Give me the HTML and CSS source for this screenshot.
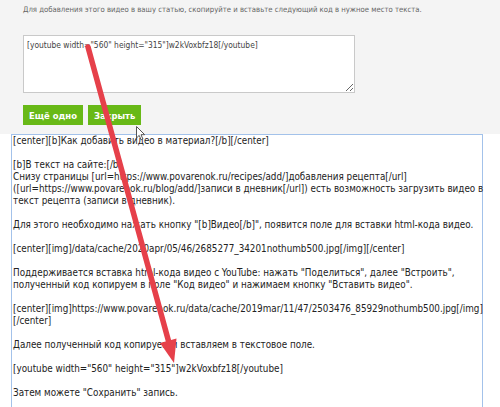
FILE: index.html
```html
<!DOCTYPE html>
<html lang="ru">
<head>
<meta charset="utf-8">
<title>Видео</title>
<link rel="stylesheet" href="styles.css">
</head>
<body>
<div class="page">
  <div class="panel">
    <p class="hint">Для добавления этого видео в вашу статью, скопируйте и вставьте следующий код в нужное место текста.</p>
    <textarea class="code">[youtube width="560" height="315"]w2kVoxbfz18[/youtube]</textarea>
    <div class="actions">
      <button class="btn">Ещё одно</button>
      <button class="btn">Закрыть</button>
    </div>
  </div>
  <div class="editor">[center][b]Как добавить видео в материал?[/b][/center]

[b]В текст на сайте:[/b]
Снизу страницы [url=https://www.povarenok.ru/recipes/add/]добавления рецепта[/url]
([url=https://www.povarenok.ru/blog/add/]записи в дневник[/url]) есть возможность загрузить видео в
текст рецепта (записи в дневник).

Для этого необходимо нажать кнопку "[b]Видео[/b]", появится поле для вставки html-кода видео.

[center][img]/data/cache/2020apr/05/46/2685277_34201nothumb500.jpg[/img][/center]

Поддерживается вставка html-кода видео с YouTube: нажать "Поделиться", далее "Встроить",
полученный код копируем в поле "Код видео" и нажимаем кнопку "Вставить видео".

[center][img]https://www.povarenok.ru/data/cache/2019mar/11/47/2503476_85929nothumb500.jpg[/img]
[/center]

Далее полученный код копируем и вставляем в текстовое поле.

[youtube width="560" height="315"]w2kVoxbfz18[/youtube]

Затем можете "Сохранить" запись.</div>
  <svg class="arrow" width="500" height="407" viewBox="0 0 500 407">
    <line x1="88" y1="47" x2="168.5" y2="341" stroke="#e6404a" stroke-width="5.5" stroke-linecap="round"/>
    <polygon points="174,363 176.5,338.5 160,343" fill="#e6404a"/>
  </svg>
  <svg class="cursor" width="10" height="15" viewBox="0 0 10 15">
    <path d="M0.5,0.5 L0.5,12 L3.2,9.4 L5.1,13.8 L6.9,13 L5,8.7 L8.7,8.7 Z" fill="#fff" stroke="#555" stroke-width="1"/>
  </svg>
</div>
</body>
</html>
```
FILE: styles.css
```css
html, body {
  margin: 0;
  padding: 0;
  background: #ffffff;
}

.page {
  position: relative;
  width: 500px;
  height: 407px;
  overflow: hidden;
  font-family: "DejaVu Sans Condensed", "DejaVu Sans", sans-serif;
}

.panel {
  box-sizing: border-box;
  height: 134px;
  background: #f4f4f4;
  padding: 4px 0 0 23px;
}

.hint {
  margin: 0;
  font-size: 7.7px;
  line-height: 12px;
  color: #666;
}

.code {
  display: block;
  box-sizing: border-box;
  width: 332px;
  height: 58px;
  margin: 19px 0 0;
  padding: 3px 3px;
  border: 1px solid #c9c9c9;
  background: #fff;
  font-family: "DejaVu Sans Condensed", "DejaVu Sans", sans-serif;
  font-size: 8.4px;
  line-height: 12px;
  color: #444;
  outline: none;
}

.actions {
  display: flex;
  gap: 5px;
  margin-top: 12px;
}

.btn {
  height: 20px;
  padding: 0 6px;
  border: none;
  background: #68b917;
  color: #fff;
  font-family: "DejaVu Sans Condensed", "DejaVu Sans", sans-serif;
  font-weight: bold;
  font-size: 9.4px;
}

.editor {
  box-sizing: border-box;
  width: 472px;
  height: 273px;
  margin-left: 11px;
  padding: 0 1px;
  border: 1px solid #a3c2ea;
  border-bottom: none;
  background: #fff;
  white-space: pre;
  font-size: 9.8px;
  line-height: 12px;
  color: #222;
}

.arrow {
  position: absolute;
  left: 0;
  top: 0;
  pointer-events: none;
}

.cursor {
  position: absolute;
  left: 136px;
  top: 126px;
  pointer-events: none;
}
```
